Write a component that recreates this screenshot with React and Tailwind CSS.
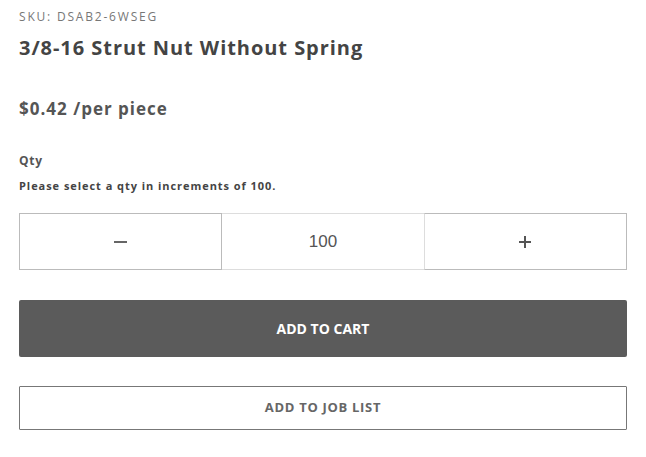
export default function App() {
  return (
    <div className="bg-white min-h-screen px-[19px] pt-[9px] text-[#444]" style={{ fontFamily: '"Open Sans", sans-serif' }}>
      <div className="w-[608px]">
        <p className="text-[12px] leading-[16px] text-[#777] tracking-[1.8px]">SKU: DSAB2-6WSEG</p>
        <h1 className="mt-[10px] text-[20px] leading-[26px] font-bold text-[#444] tracking-[0.95px]">
          3/8-16 Strut Nut Without Spring
        </h1>
        <p className="mt-[37px] text-[17px] leading-[22px] font-bold text-[#555] tracking-[1px]">$0.42 /per piece</p>

        <p className="mt-[33px] text-[12px] leading-[16px] font-bold text-[#555] tracking-[0.8px]">Qty</p>
        <p className="mt-[9px] text-[11px] leading-[16px] font-bold text-[#444] tracking-[0.95px]">
          Please select a qty in increments of 100.
        </p>

        <div className="mt-[19px] flex h-[57px]">
          <button className="flex-1 border border-[#bbb] flex items-center justify-center">
            <span className="block w-[13px] h-[2px] bg-[#666]" />
          </button>
          <div
            className="flex-1 border-y border-[#ddd] flex items-center justify-center text-[17px] text-[#555]"
            style={{ fontFamily: '"Liberation Sans", Arial, sans-serif' }}
          >
            100
          </div>
          <button className="flex-1 border border-[#bbb] border-l-[#ddd] flex items-center justify-center">
            <span className="relative block w-[12px] h-[12px]">
              <span className="absolute left-0 top-[5px] w-[12px] h-[2px] bg-[#555]" />
              <span className="absolute top-0 left-[5px] w-[2px] h-[12px] bg-[#555]" />
            </span>
          </button>
        </div>

        <button className="mt-[30px] w-full h-[57px] rounded-[2px] bg-[#5b5b5b] text-white text-[14px] font-bold uppercase">
          Add to Cart
        </button>

        <button className="mt-[29px] w-full h-[44px] border border-[#777] rounded-[1px] bg-white text-[#666] text-[13px] font-bold uppercase tracking-[0.7px]">
          Add to Job List
        </button>
      </div>
    </div>
  )
}
